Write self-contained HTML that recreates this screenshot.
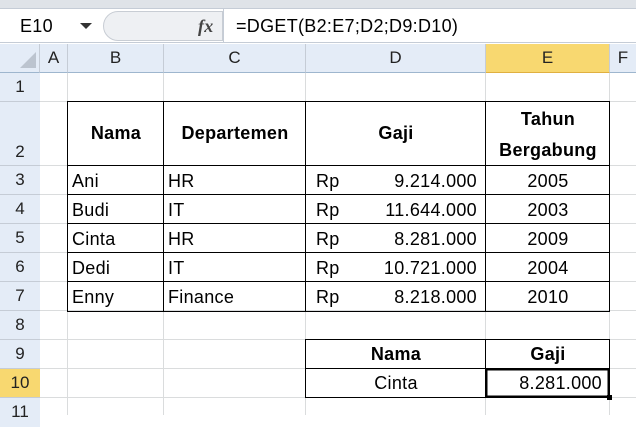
<!DOCTYPE html><html><head><style>
body{margin:0;width:636px;height:415px;overflow:hidden;background:#fff;font-family:"Liberation Sans",sans-serif;position:relative}
div{position:absolute;box-sizing:border-box}
.t{font-size:18px;color:#000;white-space:nowrap;line-height:29px;letter-spacing:0.3px}
.h{background:#e4ecf7;color:#222;font-size:17px;text-align:center;line-height:28px}
.b{font-weight:bold}
</style></head><body>
<div style="left:0;top:0;width:636px;height:9px;background:#dfe3e8;border-bottom:1px solid #c5ccd6"></div>
<div style="left:0;top:9px;width:636px;height:34px;background:#fff;border-bottom:1px solid #c5ccd6"></div>
<div class="t" style="left:20px;top:12px;font-size:18px">E10</div>
<div style="left:80px;top:23px;width:0;height:0;border-left:6px solid transparent;border-right:6px solid transparent;border-top:6px solid #333"></div>
<div style="left:103px;top:11px;width:120px;height:30px;background:#eef0f3;border:1px solid #c8cdd4;border-radius:15px 0 0 15px"></div>
<div style="left:223px;top:9px;width:1px;height:34px;background:#c5ccd6"></div>
<div class="t" style="left:198px;top:12px;font-family:'Liberation Serif',serif;font-style:italic;font-weight:bold;color:#444">fx</div>
<div class="t" style="left:236px;top:12px;font-size:18px">=DGET(B2:E7;D2;D9:D10)</div>
<div class="h" style="left:0;top:44px;width:40px;height:29px;border-right:1px solid #c5ccd6;border-bottom:1px solid #9eb6ce"></div>
<div style="left:20px;top:52px;width:0;height:0;border-left:16px solid transparent;border-bottom:16px solid #bcc4cf"></div>
<div class="h" style="left:40px;top:44px;width:28px;height:29px;border-right:1px solid #c5ccd6;border-bottom:1px solid #9eb6ce">A</div>
<div class="h" style="left:68px;top:44px;width:96px;height:29px;border-right:1px solid #c5ccd6;border-bottom:1px solid #9eb6ce">B</div>
<div class="h" style="left:164px;top:44px;width:142px;height:29px;border-right:1px solid #c5ccd6;border-bottom:1px solid #9eb6ce">C</div>
<div class="h" style="left:306px;top:44px;width:180px;height:29px;border-right:1px solid #c5ccd6;border-bottom:1px solid #9eb6ce">D</div>
<div class="h" style="left:486px;top:44px;width:124px;height:29px;background:#f8d870;border-right:1px solid #c5ccd6;border-bottom:1px solid #e0b040">E</div>
<div class="h" style="left:610px;top:44px;width:26px;height:29px;border-bottom:1px solid #9eb6ce">F</div>
<div class="h" style="left:0;top:73px;width:40px;height:342px;border-right:1px solid #9eb6ce"></div>
<div class="h" style="left:0;top:73px;width:40px;height:29px;border-bottom:1px solid #c5ccd6">1</div>
<div class="h" style="left:0;top:102px;width:40px;height:64px;border-bottom:1px solid #c5ccd6;line-height:100px">2</div>
<div class="h" style="left:0;top:166px;width:40px;height:29px;border-bottom:1px solid #c5ccd6">3</div>
<div class="h" style="left:0;top:195px;width:40px;height:29px;border-bottom:1px solid #c5ccd6">4</div>
<div class="h" style="left:0;top:224px;width:40px;height:29px;border-bottom:1px solid #c5ccd6">5</div>
<div class="h" style="left:0;top:253px;width:40px;height:29px;border-bottom:1px solid #c5ccd6">6</div>
<div class="h" style="left:0;top:282px;width:40px;height:29px;border-bottom:1px solid #c5ccd6">7</div>
<div class="h" style="left:0;top:311px;width:40px;height:29px;border-bottom:1px solid #c5ccd6">8</div>
<div class="h" style="left:0;top:340px;width:40px;height:29px;border-bottom:1px solid #c5ccd6">9</div>
<div class="h" style="left:0;top:369px;width:40px;height:29px;border-bottom:1px solid #c5ccd6;background:#f8d870">10</div>
<div class="h" style="left:0;top:398px;width:40px;height:29px">11</div>
<svg style="position:absolute;left:40px;top:73px" width="596" height="342">
<g stroke="#dadcdd" stroke-width="1">
<line x1="27.5" y1="0" x2="27.5" y2="342"/><line x1="123.5" y1="0" x2="123.5" y2="342"/><line x1="265.5" y1="0" x2="265.5" y2="342"/><line x1="445.5" y1="0" x2="445.5" y2="342"/><line x1="569.5" y1="0" x2="569.5" y2="342"/>
<line x1="0" y1="28.5" x2="596" y2="28.5"/><line x1="0" y1="92.5" x2="596" y2="92.5"/><line x1="0" y1="121.5" x2="596" y2="121.5"/><line x1="0" y1="150.5" x2="596" y2="150.5"/><line x1="0" y1="179.5" x2="596" y2="179.5"/><line x1="0" y1="208.5" x2="596" y2="208.5"/><line x1="0" y1="237.5" x2="596" y2="237.5"/><line x1="0" y1="266.5" x2="596" y2="266.5"/><line x1="0" y1="295.5" x2="596" y2="295.5"/><line x1="0" y1="324.5" x2="596" y2="324.5"/>
</g>
<g stroke="#000" stroke-width="1" fill="none">
<rect x="27.5" y="28.5" width="542" height="210"/>
<line x1="27.5" y1="92.5" x2="569.5" y2="92.5"/><line x1="27.5" y1="121.5" x2="569.5" y2="121.5"/><line x1="27.5" y1="150.5" x2="569.5" y2="150.5"/><line x1="27.5" y1="179.5" x2="569.5" y2="179.5"/><line x1="27.5" y1="208.5" x2="569.5" y2="208.5"/>
<line x1="123.5" y1="28.5" x2="123.5" y2="238.5"/><line x1="265.5" y1="28.5" x2="265.5" y2="238.5"/><line x1="445.5" y1="28.5" x2="445.5" y2="238.5"/>
<rect x="265.5" y="266.5" width="304" height="58"/><line x1="265.5" y1="295.5" x2="569.5" y2="295.5"/><line x1="445.5" y1="266.5" x2="445.5" y2="324.5"/>
<rect x="446.5" y="296.5" width="122" height="27" stroke-width="2"/>
</g>
<rect x="567" y="322" width="5" height="5" fill="#000"/>
</svg>
<div class="t b" style="left:68px;top:119px;width:96px;text-align:center">Nama</div>
<div class="t b" style="left:164px;top:119px;width:142px;text-align:center">Departemen</div>
<div class="t b" style="left:306px;top:119px;width:180px;text-align:center">Gaji</div>
<div class="t b" style="left:486px;top:105px;width:124px;text-align:center">Tahun</div>
<div class="t b" style="left:486px;top:136px;width:124px;text-align:center">Bergabung</div>
<div class="t" style="left:72px;top:167px">Ani</div><div class="t" style="left:168px;top:167px">HR</div><div class="t" style="left:316px;top:167px">Rp</div><div class="t" style="left:306px;top:167px;width:171px;text-align:right">9.214.000</div><div class="t" style="left:486px;top:167px;width:124px;text-align:center">2005</div>
<div class="t" style="left:72px;top:196px">Budi</div><div class="t" style="left:168px;top:196px">IT</div><div class="t" style="left:316px;top:196px">Rp</div><div class="t" style="left:306px;top:196px;width:171px;text-align:right">11.644.000</div><div class="t" style="left:486px;top:196px;width:124px;text-align:center">2003</div>
<div class="t" style="left:72px;top:225px">Cinta</div><div class="t" style="left:168px;top:225px">HR</div><div class="t" style="left:316px;top:225px">Rp</div><div class="t" style="left:306px;top:225px;width:171px;text-align:right">8.281.000</div><div class="t" style="left:486px;top:225px;width:124px;text-align:center">2009</div>
<div class="t" style="left:72px;top:254px">Dedi</div><div class="t" style="left:168px;top:254px">IT</div><div class="t" style="left:316px;top:254px">Rp</div><div class="t" style="left:306px;top:254px;width:171px;text-align:right">10.721.000</div><div class="t" style="left:486px;top:254px;width:124px;text-align:center">2004</div>
<div class="t" style="left:72px;top:283px">Enny</div><div class="t" style="left:168px;top:283px">Finance</div><div class="t" style="left:316px;top:283px">Rp</div><div class="t" style="left:306px;top:283px;width:171px;text-align:right">8.218.000</div><div class="t" style="left:486px;top:283px;width:124px;text-align:center">2010</div>
<div class="t b" style="left:306px;top:340px;width:180px;text-align:center">Nama</div>
<div class="t b" style="left:486px;top:340px;width:124px;text-align:center">Gaji</div>
<div class="t" style="left:306px;top:369px;width:180px;text-align:center">Cinta</div>
<div class="t" style="left:486px;top:369px;width:116px;text-align:right">8.281.000</div>
</body></html>
